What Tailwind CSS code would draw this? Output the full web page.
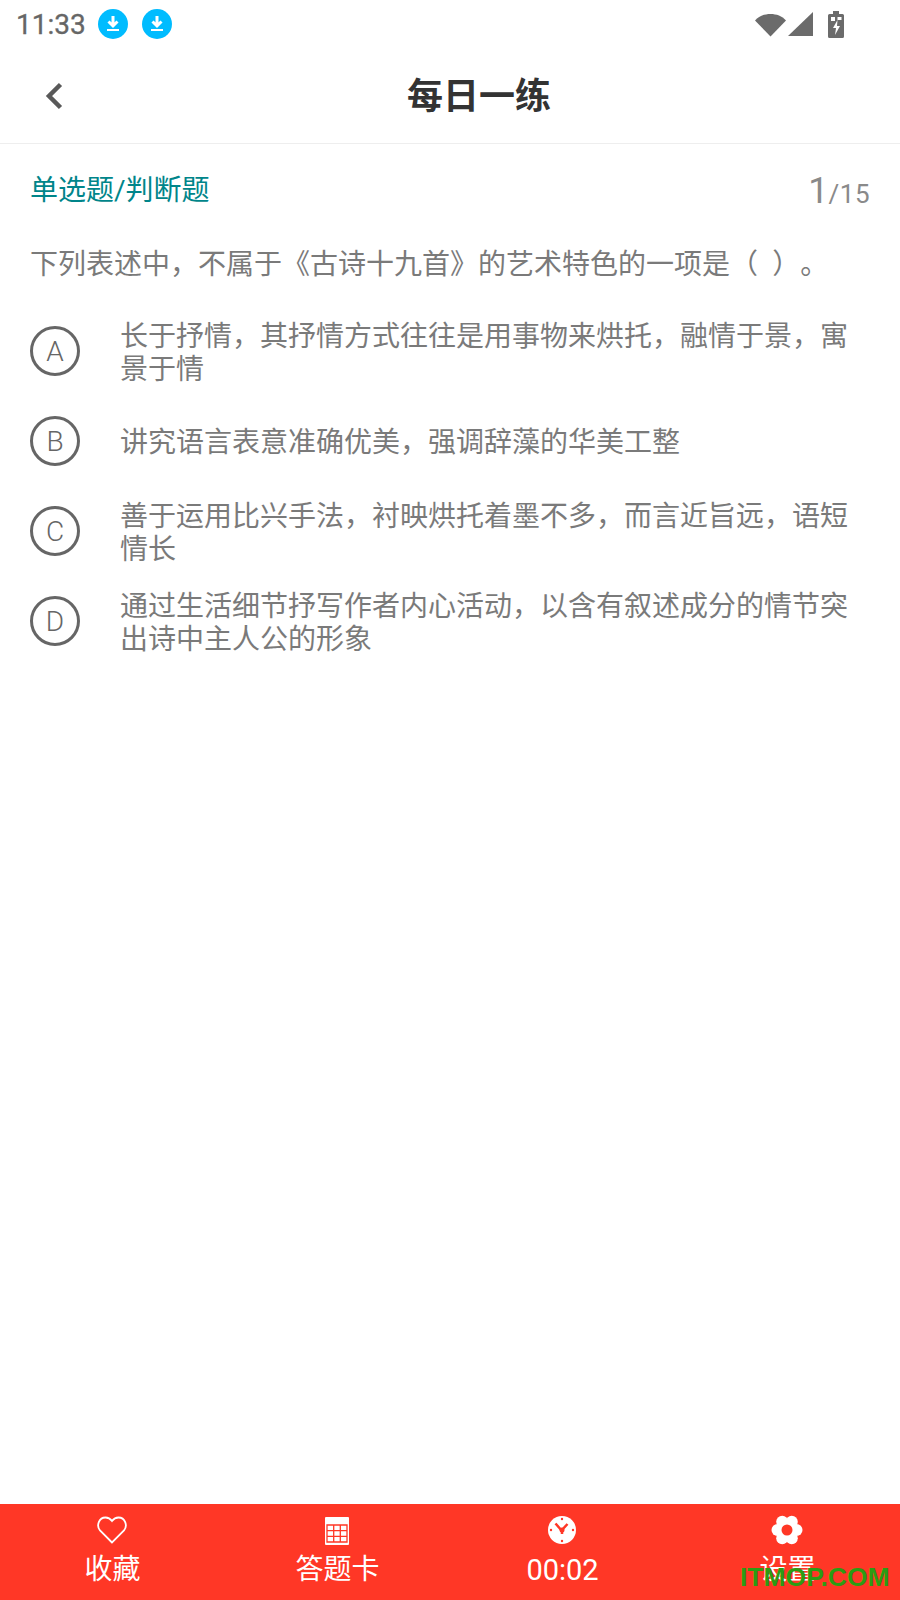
<!DOCTYPE html>
<html lang="zh">
<head>
<meta charset="utf-8">
<script src="https://cdn.jsdelivr.net/npm/@tailwindcss/browser@4"></script>
</head>
<body class="bg-white">
<div class="relative w-[900px] h-[1600px] flex flex-col overflow-hidden font-['Roboto','Noto_Sans_CJK_SC',sans-serif] [text-spacing-trim:space-all]">
  <!-- status bar -->
  <div class="h-[48px] shrink-0 flex items-center pl-[16px] pr-[56px] text-[#666]">
    <span class="text-[28px] leading-[48px] w-[70px] translate-y-[1px] [-webkit-text-stroke:0.3px_#666]">11:33</span>
    <svg class="ml-[12px]" width="30" height="30" viewBox="0 0 30 30"><circle cx="15" cy="15" r="15" fill="#00bcff"/><path d="M15 7v10M10.500 12.500 15 17l4.500-4.500" fill="none" stroke="#fff" stroke-width="3"/><rect x="9" y="20" width="12" height="2" fill="#fff"/></svg>
    <svg class="ml-[14px]" width="30" height="30" viewBox="0 0 30 30"><circle cx="15" cy="15" r="15" fill="#00bcff"/><path d="M15 7v10M10.500 12.500 15 17l4.500-4.500" fill="none" stroke="#fff" stroke-width="3"/><rect x="9" y="20" width="12" height="2" fill="#fff"/></svg>
    <div class="ml-auto flex items-center">
      <svg width="31" height="26" viewBox="0 0 31 26"><path d="M0 9.500C4 5 9.500 3 15.500 3s11.500 2 15.500 6.500L15.500 25.500Z" fill="#6b6b6b"/></svg>
      <svg class="ml-[2px]" width="25" height="26" viewBox="0 0 25 26"><path d="M25 1v24H0Z" fill="#6b6b6b"/></svg>
      <svg class="ml-[15px]" width="16" height="27" viewBox="0 0 16 27"><path d="M1.500 3H5V0h6v3h3.500A1.500 1.500 0 0 1 16 4.500v21a1.500 1.500 0 0 1-1.500 1.500h-13A1.500 1.500 0 0 1 0 25.500v-21A1.500 1.500 0 0 1 1.500 3Z" fill="#6b6b6b"/><rect x="3" y="6" width="4" height="4" fill="#fff"/><rect x="9.500" y="6" width="4" height="3" fill="#fff"/><path d="M9.500 9 5 17h3l-1 7 5-9H9Z" fill="#fff"/></svg>
    </div>
  </div>
  <!-- header -->
  <header class="relative h-[96px] shrink-0 flex items-center justify-center border-b border-[#eeeeee] pl-[58px]">
    <svg class="absolute left-[44px] top-[34px]" width="20" height="28" viewBox="0 0 20 28"><path d="M16.500 2.500 5 14l11.500 11.500" fill="none" stroke="#595959" stroke-width="4.500"/></svg>
    <h1 class="text-[36px] leading-[44px] -translate-y-[3px] font-bold text-[#333] font-['Noto_Sans_CJK_SC',sans-serif]">每日一练</h1>
  </header>
  <!-- question -->
  <main class="flex-1 px-[30px] font-['Roboto','Noto_Sans_CJK_SC',sans-serif]">
    <div class="flex items-start justify-between h-[101px] pt-[24px]">
      <span class="mt-[4px] text-[28px] leading-[38px] text-[#00858a]">单选题/判断题</span>
      <span class="text-[#8a8a8a] mt-[3px] whitespace-nowrap"><span class="text-[36px] leading-[40px]">1</span><span class="text-[26px] leading-[40px] tracking-[0.5px]">/15</span></span>
    </div>
    <p class="text-[28px] leading-[40px] text-[#7a7a7a]">下列表述中，不属于《古诗十九首》的艺术特色的一项是（&ensp;）。</p>
    <ul class="mt-[21px]">
      <li class="flex items-center h-[90px]">
        <span class="w-[50px] h-[50px] shrink-0 rounded-full border-[3px] border-[#666] flex items-center justify-center pt-[2px] text-[28px] font-light text-[#666]">A</span>
        <span class="ml-[40px] pt-[3px] text-[28px] leading-[33px] text-[#7a7a7a]">长于抒情，其抒情方式往往是用事物来烘托，融情于景，寓景于情</span>
      </li>
      <li class="flex items-center h-[90px]">
        <span class="w-[50px] h-[50px] shrink-0 rounded-full border-[3px] border-[#666] flex items-center justify-center pt-[2px] text-[28px] font-light text-[#666]">B</span>
        <span class="ml-[40px] pt-[3px] text-[28px] leading-[33px] text-[#7a7a7a]">讲究语言表意准确优美，强调辞藻的华美工整</span>
      </li>
      <li class="flex items-center h-[90px]">
        <span class="w-[50px] h-[50px] shrink-0 rounded-full border-[3px] border-[#666] flex items-center justify-center pt-[2px] text-[28px] font-light text-[#666]">C</span>
        <span class="ml-[40px] pt-[3px] text-[28px] leading-[33px] text-[#7a7a7a]">善于运用比兴手法，衬映烘托着墨不多，而言近旨远，语短情长</span>
      </li>
      <li class="flex items-center h-[90px]">
        <span class="w-[50px] h-[50px] shrink-0 rounded-full border-[3px] border-[#666] flex items-center justify-center pt-[2px] text-[28px] font-light text-[#666]">D</span>
        <span class="ml-[40px] pt-[3px] text-[28px] leading-[33px] text-[#7a7a7a]">通过生活细节抒写作者内心活动，以含有叙述成分的情节突出诗中主人公的形象</span>
      </li>
    </ul>
  </main>
  <!-- bottom bar -->
  <nav class="h-[96px] shrink-0 bg-[#ff3726] grid grid-cols-4 text-white text-[28px] leading-[36px]">
    <div class="flex flex-col items-center pt-[11px] pr-[2px]">
      <svg width="30" height="30" viewBox="0 0 30 30"><path d="M15 27.500 3 15.500C-1 10.500 2 2.500 8.500 2.500c3 0 5 1.500 6.500 3.500 1.500-2 3.500-3.500 6.500-3.500 6.500 0 9.500 8 5.500 13Z" fill="none" stroke="#fff" stroke-width="1.800"/></svg>
      <span class="mt-[7px] ml-[2px]">收藏</span>
    </div>
    <div class="flex flex-col items-center pt-[11px] pr-[2px]">
      <svg width="30" height="30" viewBox="0 0 30 30"><rect x="3" y="2" width="24" height="28" rx="1" fill="#fff"/><path d="M5 10h20v17H5Z" fill="none" stroke="#ff3726" stroke-width="1.300"/><path d="M5 15.600h20M5 21.300h20M11.700 10v17M18.300 10v17" stroke="#ff3726" stroke-width="1.300"/></svg>
      <span class="mt-[7px] ml-[2px]">答题卡</span>
    </div>
    <div class="flex flex-col items-center pt-[11px] pr-[2px]">
      <svg width="30" height="30" viewBox="0 0 30 30"><circle cx="15" cy="15" r="14" fill="#fff"/><path d="M15 16 8.500 8.500M15 17v-2l5.500-6" fill="none" stroke="#ff3726" stroke-width="2.500"/><circle cx="15" cy="15" r="2.500" fill="#ff3726"/><path d="M15 17v2" stroke="#ff3726" stroke-width="2.500"/><circle cx="15" cy="4" r="1.200" fill="#ff3726"/><circle cx="15" cy="26" r="1.200" fill="#ff3726"/><circle cx="4" cy="15" r="1.200" fill="#ff3726"/><circle cx="26" cy="15" r="1.200" fill="#ff3726"/></svg>
      <span class="mt-[7px] ml-[2px] text-[29px]">00:02</span>
    </div>
    <div class="flex flex-col items-center pt-[10px] pr-[2px]">
      <svg width="32" height="32" viewBox="0 0 32 32"><circle cx="6.500" cy="16" r="6" fill="#fff"/><circle cx="25.500" cy="16" r="6" fill="#fff"/><circle cx="11.200" cy="7.800" r="6" fill="#fff"/><circle cx="20.800" cy="7.800" r="6" fill="#fff"/><circle cx="11.200" cy="24.200" r="6" fill="#fff"/><circle cx="20.800" cy="24.200" r="6" fill="#fff"/><circle cx="16" cy="16" r="9" fill="#fff"/><circle cx="16" cy="16" r="5.500" fill="#ff3726"/></svg>
      <span class="mt-[6px] ml-[2px]">设置</span>
    </div>
  </nav>
  <span class="absolute left-[740px] top-[1562px] text-[26.5px] leading-[30px] font-bold text-[#2c9c13] font-['Liberation_Sans',sans-serif]">ITMOP.COM</span>
</div>
</body>
</html>
